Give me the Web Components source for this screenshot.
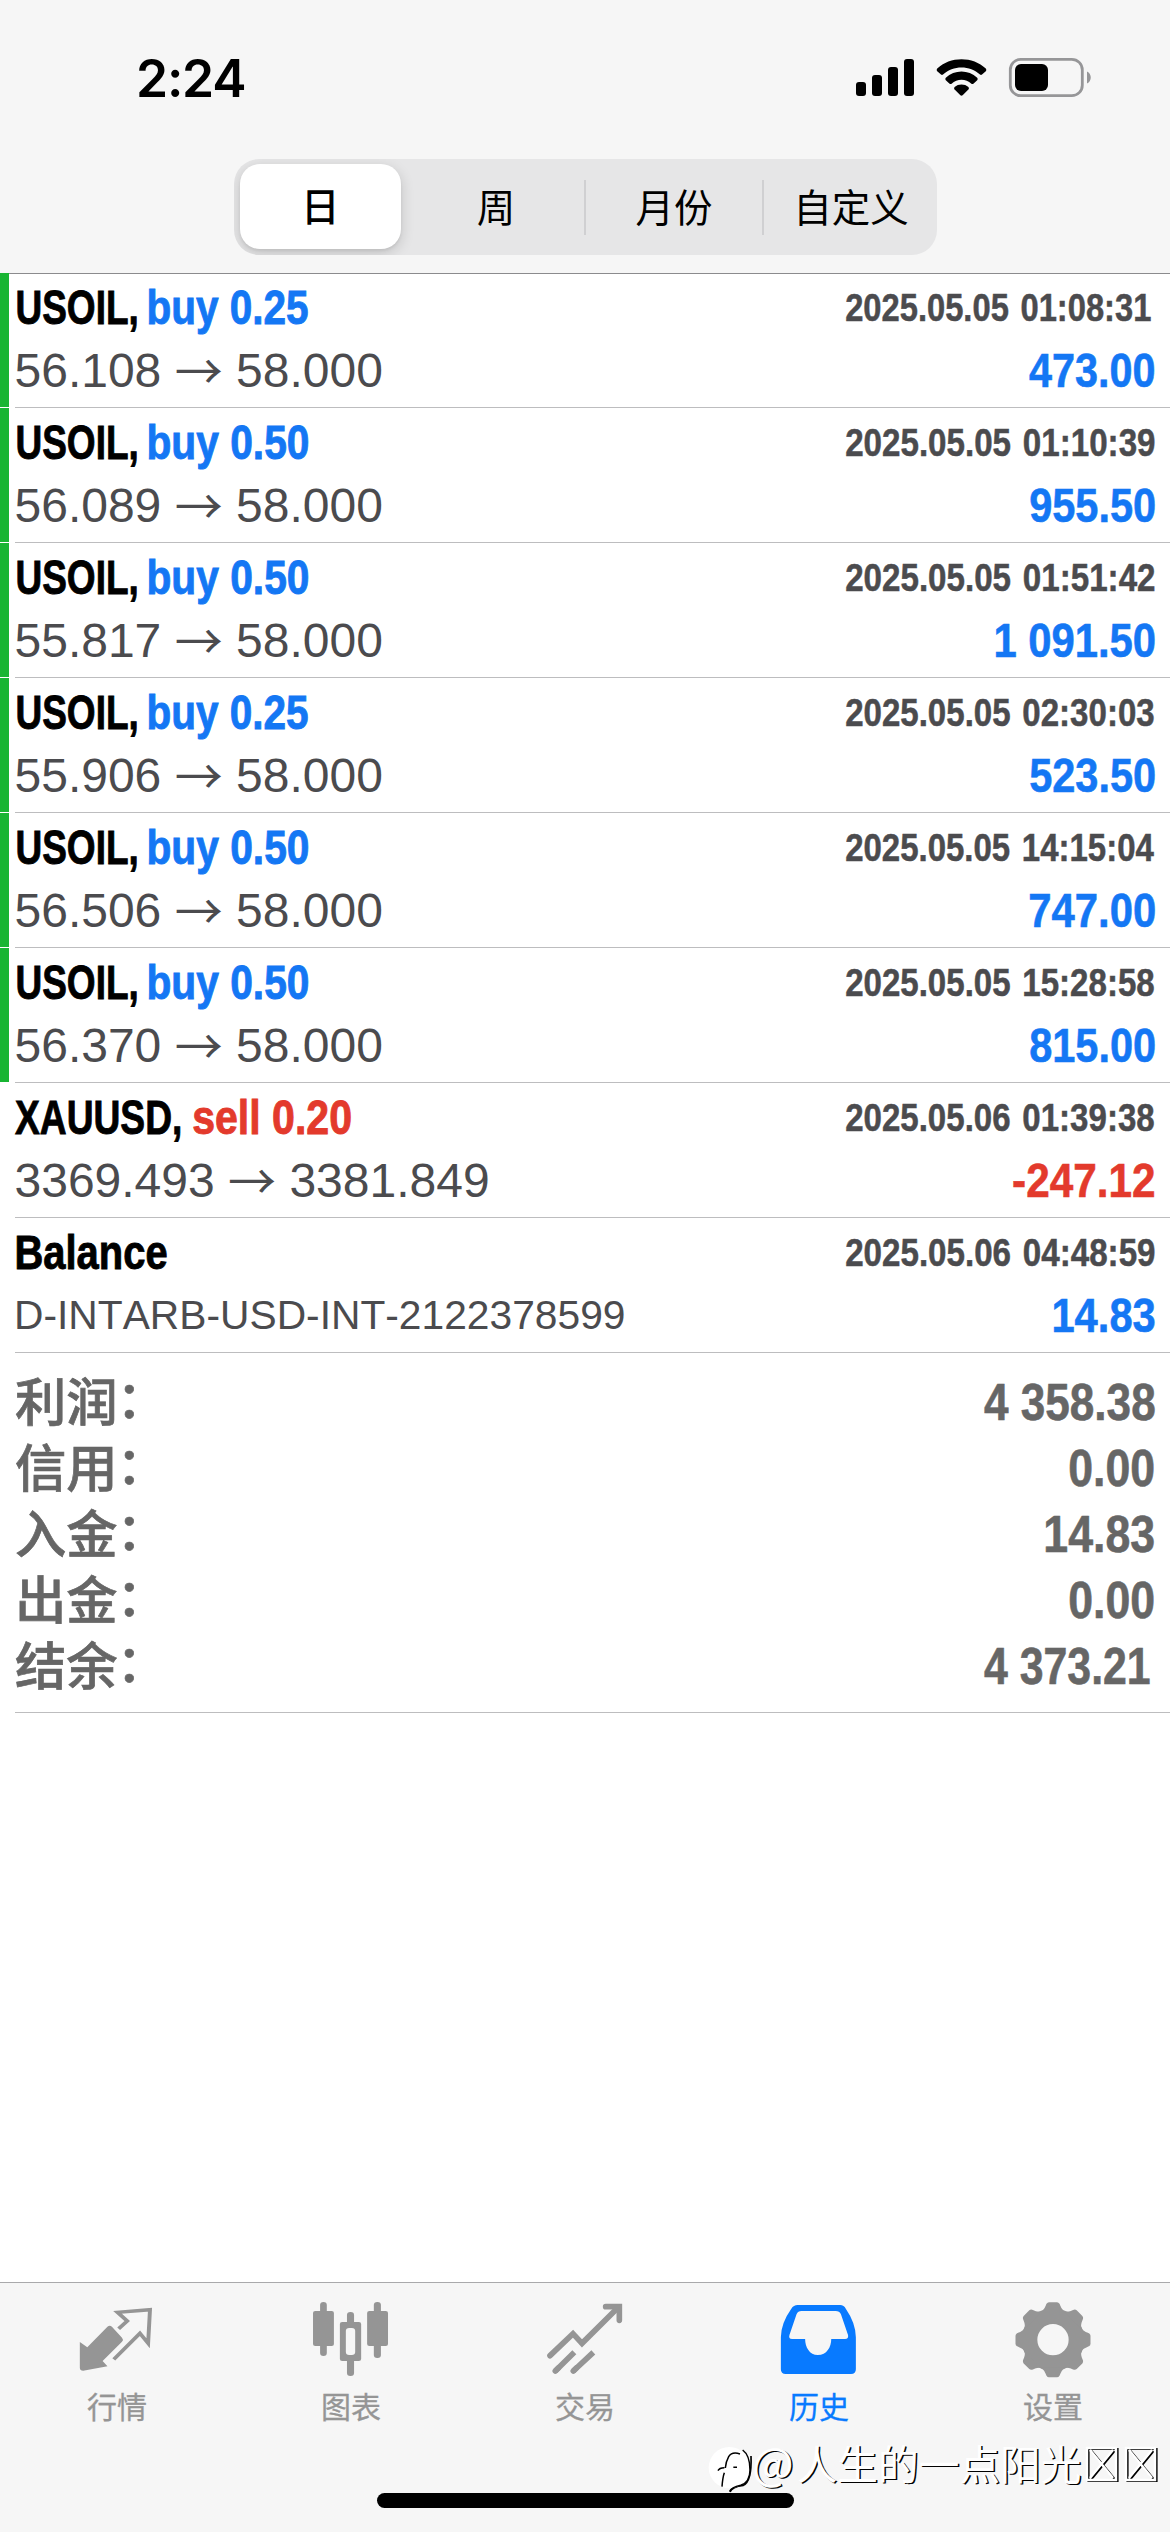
<!DOCTYPE html>
<html lang="zh-CN">
<head>
<meta charset="utf-8">
<meta name="viewport" content="width=device-width">
<title>历史</title>
<style>
html,body{margin:0;padding:0;background:#fff}
body{font-family:"Liberation Sans","Noto Sans CJK SC",sans-serif}
</style>
</head>
<body>
<history-screen></history-screen>
<script>
const CJK = '"Noto Sans CJK SC",sans-serif';

/* Text condensed horizontally so that its ink is exactly `ink` px wide. */
class FitText extends HTMLElement {
  connectedCallback() {
    const root = this.attachShadow({mode: 'open'});
    root.innerHTML = `<style>
      :host{display:block;flex:none;white-space:pre;overflow:visible}
      span{display:inline-block;transform-origin:0 0;font-kerning:none;-webkit-text-stroke:var(--stroke,0) currentColor}
    </style><span></span>`;
    const span = root.querySelector('span');
    span.textContent = this.getAttribute('text');
    const ink = parseFloat(this.getAttribute('ink'));
    const cs = getComputedStyle(this);
    const ctx = document.createElement('canvas').getContext('2d');
    ctx.font = `${cs.fontWeight} ${cs.fontSize} "Liberation Sans"`;
    ctx.fontKerning = 'none';
    const gap = parseFloat(this.getAttribute('gap') || 0);
    span.style.wordSpacing = gap + 'px';
    const m = ctx.measureText(span.textContent);
    const k = ink / (m.actualBoundingBoxRight + m.actualBoundingBoxLeft + gap);
    this.style.width = ink + 'px';
    span.style.transform = `translateX(${m.actualBoundingBoxLeft * k}px) scaleX(${k})`;
  }
}
customElements.define('fit-text', FitText);

class StatusBar extends HTMLElement {
  connectedCallback() {
    this.attachShadow({mode: 'open'}).innerHTML = `<style>
      :host{display:flex;justify-content:space-between;align-items:flex-start;height:159px;padding:48px 78px 0 139px;box-sizing:border-box;color:#000}
      .t{font:600 51.500px/60px Inter,sans-serif;letter-spacing:-1.200px;margin-left:-3px}
      svg{display:block;margin-top:8px}
    </style>
    <div class="t">2:24</div>
    <svg width="238" height="44" viewBox="854 56 238 44">
      <rect x="856" y="82" width="10" height="14" rx="3"/><rect x="872" y="75" width="10" height="21" rx="3"/>
      <rect x="888" y="67" width="10" height="29" rx="3"/><rect x="904" y="59" width="10" height="37" rx="3"/>
      <path d="M937.2 68.5C950 56 973 56 985.8 68.5Q987 70 985.8 71.2L982 74.6Q981 75.3 980 74.6C970 65.2 953 65.2 943 74.6Q942 75.3 941 74.6L937.2 71.2Q936 70 937.2 68.5Z"/>
      <path d="M945.8 77.7C954.5 69.4 968.5 69.4 977.2 77.7Q978.3 79 977.2 80.2L973.4 83.7Q972.4 84.4 971.4 83.7C966 78.5 957 78.5 951.6 83.7Q950.6 84.4 949.6 83.7L945.8 80.2Q944.7 79 945.8 77.7Z"/>
      <path d="M954.6 87C958.4 83.7 964.6 83.7 968.4 87Q969.6 88.3 968.4 89.5L962.6 95.3Q961.5 96.2 960.4 95.3L954.6 89.5Q953.4 88.3 954.6 87Z"/>
      <rect x="1010.3" y="59.3" width="72" height="36.4" rx="10.5" fill="none" stroke="#969698" stroke-width="2.8"/>
      <rect x="1015" y="64" width="33" height="27" rx="6"/>
      <path d="M1087 71.5C1092 73.5 1092 81.500 1087 83.500Z" fill="#969698"/>
    </svg>`;
  }
}
customElements.define('status-bar', StatusBar);

class SegmentedControl extends HTMLElement {
  connectedCallback() {
    this.attachShadow({mode: 'open'}).innerHTML = `<style>
      :host{display:flex;align-items:center;box-sizing:border-box;width:703px;height:96px;margin:0 0 18px 234px;padding-left:5.500px;
        border-radius:25px;background:#e6e6e7;font:400 38.500px/84px ${CJK};color:#000;text-align:center;overflow:hidden}
      div{flex:none}
      .on{width:161.500px;height:84.500px;margin-top:-1px;border-radius:20px;background:#fff;line-height:80px;font-weight:500;box-shadow:0 4px 14px rgba(0,0,0,.16),0 2px 3px rgba(0,0,0,.06)}
      .b,.c,.d{margin-top:-5px}
      .b{width:190px}
      .c{width:176px}
      .d{width:174px}
      i{width:2px;height:55px;background:#d0d0d2;flex:none}
      i.first{margin-left:-7px}
    </style><div class="on">日</div><div class="b">周</div><i class="first"></i><div class="c">月份</div><i></i><div class="d">自定义</div>`;
  }
}
customElements.define('segmented-control', SegmentedControl);

class DealRow extends HTMLElement {
  connectedCallback() {
    const a = n => this.getAttribute(n);
    const act = a('action') ? `<fit-text class="${a('tone')}" text="${a('action')}" ink="${a('action-ink')}"></fit-text>` : '';
    const detail = a('to')
      ? `<div class="price">${a('from')} <b>→</b> ${a('to')}</div>`
      : `<fit-text class="note" text="${a('note')}" ink="607"></fit-text>`;
    this.attachShadow({mode: 'open'}).innerHTML = `<style>
      :host{display:flex;height:135px;background:#fff}
      .mark{width:9px;height:134px;flex:none}
      :host([closed]) .mark{background:#18b532}
      .body{flex:1;margin-left:6px;box-sizing:border-box;border-bottom:1px solid #bdbdbf;padding:7px 15.700px 0 1.500px}
      .line{display:flex;align-items:flex-start;justify-content:space-between;height:63px}
      .name{display:flex;gap:12.500px;margin-left:var(--shift,0)}
      .name,.sum{font:700 48px/56px "Liberation Sans",sans-serif;--stroke:.9px;color:#000}
      .sum{--stroke:.6px}
      .date{font:700 38.500px/44px "Liberation Sans",sans-serif;--stroke:.5px;color:#4b4b4e;margin-top:6px;width:308.300px}
      .price{font:400 48px/56px "Liberation Sans",sans-serif;color:#4b4b4e;margin-left:-2px;white-space:pre;font-kerning:none}
      .price b{font:400 48px/40px ${CJK};vertical-align:-2px}
      .note{font:400 40.500px/56px "Liberation Sans",sans-serif;color:#4b4b4e;margin-top:-1px}
      .blue{color:#1477f4}.red{color:#e33a2c}
    </style>
    <div class="mark"></div>
    <div class="body">
      <div class="line"><div class="name"><fit-text text="${a('symbol')}" ink="${a('symbol-ink')}"></fit-text>${act}</div>
        <div class="date"><fit-text text="${a('date')}" gap="3" ink="${/1$/.test(a('date')) ? 305 : 308.3}"></fit-text></div></div>
      <div class="line">${detail}<fit-text class="sum ${a('sum')[0] === '-' ? 'red' : 'blue'}" text="${a('sum')}" ink="${a('sum-ink')}"></fit-text></div>
    </div>`;
  }
}
customElements.define('deal-row', DealRow);

class SummaryLine extends HTMLElement {
  connectedCallback() {
    this.attachShadow({mode: 'open'}).innerHTML = `<style>
      :host{display:flex;justify-content:space-between;height:66px;color:#666}
      .k{display:flex;font:500 51.300px/66px ${CJK};margin:-2px 0 0 -1px;-webkit-text-stroke:.7px currentColor}
      .k span{margin:-3.500px 0 0 -1px}
      fit-text{font:700 51px/58px "Liberation Sans",sans-serif;--stroke:.6px;margin-top:6px;margin-right:var(--trail,0)}
    </style><div class="k"><slot></slot><span>：</span></div>
    <fit-text text="${this.getAttribute('value')}" ink="${this.getAttribute('ink')}"></fit-text>`;
  }
}
customElements.define('summary-line', SummaryLine);

const gearTeeth = Array.from({length: 8}, (_, i) =>
  `<path transform="rotate(${i * 45})" d="M-12 -28C-8 -31 -7.500 -34 -6.500 -36Q-5.500 -37.500 -4 -37.500H4Q5.500 -37.500 6.500 -36C7.500 -34 8 -31 12 -28Z"/>`).join('');
const ICONS = {
  quotes: ['206.4 105 214.4 270', `<path fill="currentColor" d="M214 246L234 262L288 200Q294 195 300 200L327 233Q332 239 327 245L275 303L288 319L223 332Q214 332 214 323Z"/><path fill="none" stroke="currentColor" stroke-width="10.500" d="M318 206L341 183L315 157L402 149L397 250L375 220L305 298"/>`],
  charts: ['833.6 105 214.4 270', `<g fill="currentColor"><rect x="858" y="126" width="18" height="162" rx="9"/><rect x="839" y="153" width="56" height="105" rx="6"/><rect x="930" y="156" width="19" height="192" rx="9"/><rect x="911" y="186" width="57" height="117" rx="6"/><rect x="1002" y="126" width="19" height="168" rx="9"/><rect x="984" y="153" width="56" height="105" rx="6"/></g><rect x="927" y="204" width="25" height="81" rx="9" fill="#f6f6f6"/>`],
  trade: ['30 15 240 270', `<g fill="none" stroke="currentColor" stroke-width="17"><g stroke-linecap="round"><path d="M45 197L114 131L141 160L250 52"/><path d="M212 50H253V91"/></g><path d="M61 243L118 187M115 243L175 187"/><path stroke-linecap="round" d="M61 243L70 234M115 243L124 234"/></g>`],
  history: ['520 105 214.4 270', `<path fill="currentColor" fill-rule="evenodd" d="M570 135H684Q694 135 699 146Q726 190 726 232V328Q726 342 713 342H538Q525 342 525 328V232Q525 190 553 146Q559 135 570 135ZM580 153Q571 153 567 163L548 225Q545 237 555 237H590C590 262 602 285 624 285C648 285 660 262 660 237H697Q707 237 705 225L686 163Q682 153 672 153Z"/>`],
  settings: ['-40 -44.700 80 90', `<g fill="currentColor"><circle r="23.400" fill="none" stroke="currentColor" stroke-width="15.500"/>${gearTeeth}</g>`]
};

class TabItem extends HTMLElement {
  connectedCallback() {
    const [box, art] = ICONS[this.getAttribute('icon')];
    this.attachShadow({mode: 'open'}).innerHTML = `<style>
      :host{display:flex;flex-direction:column;align-items:center;flex:1;color:#959595;padding-top:12px;font:400 30px/40px ${CJK}}
      :host([active]){color:#087aff}
      svg{display:block}
      div{-webkit-text-stroke:.3px currentColor}
    </style><svg width="80" height="90" viewBox="${box}" preserveAspectRatio="none">${art}</svg><div><slot></slot></div>`;
  }
}
customElements.define('tab-item', TabItem);

class UserMark extends HTMLElement {
  connectedCallback() {
    this.attachShadow({mode: 'open'}).innerHTML = `<style>
      :host{position:absolute;left:705px;top:2439px;display:flex;align-items:flex-start;height:56px;white-space:nowrap}
      .txt{font:400 40.700px/56px ${CJK};color:#fff;text-shadow:1.500px 1px 0 #000;margin:-4px 0 0 -1px}
      .txt span{font-size:44px;line-height:40px;letter-spacing:3px}
      svg{flex:none}
      .tofu{margin-left:3px}
    </style>
    <svg width="48" height="56" viewBox="45 57 144 168"><path d="M183 108Q186 184 160 196Q125 200 120 216" fill="none" stroke="#000" stroke-width="5"/><circle cx="118" cy="143" r="62" fill="#fff"/>
      <path d="M158 90Q180 106 180 150Q180 187 152 196Q124 202 119 214M150 102Q126 94 116 110Q108 124 106 144M84 152Q88 143 103 143M103 158Q98 172 96 200M130 142H141" fill="none" stroke="#000" stroke-width="4.500"/></svg>
    <div class="txt"><span>@</span>人生的一点阳光</div>
    <svg class="tofu" width="76" height="56" viewBox="0 0 76 56" fill="none"><g id="a"><path d="M3 9H32V41H3ZM6 11L29 39M29 11L6 39" stroke="#000" transform="translate(1.500 1)" stroke-width="2.200"/><path d="M3 9H32V41H3ZM6 11L29 39M29 11L6 39" stroke="#fff" stroke-width="2.400"/></g><use href="#a" x="39"/></svg>`;
  }
}
customElements.define('user-mark', UserMark);

class HistoryScreen extends HTMLElement {
  connectedCallback() {
    const deals = [
      ['56.108', '0.25', '2025.05.05 01:08:31', '473.00', 125],
      ['56.089', '0.50', '2025.05.05 01:10:39', '955.50', 124.7],
      ['55.817', '0.50', '2025.05.05 01:51:42', '1 091.50', 158.6],
      ['55.906', '0.25', '2025.05.05 02:30:03', '523.50', 124.7],
      ['56.506', '0.50', '2025.05.05 14:15:04', '747.00', 124.7],
      ['56.370', '0.50', '2025.05.05 15:28:58', '815.00', 124.7]
    ].map(d => `<deal-row closed symbol="USOIL," symbol-ink="120" action="buy ${d[1]}" action-ink="159" tone="blue" from="${d[0]}" to="58.000" date="${d[2]}" sum="${d[3]}" sum-ink="${d[4]}"></deal-row>`).join('');
    this.attachShadow({mode: 'open'}).innerHTML = `<style>
      :host{display:flex;flex-direction:column;position:relative;width:1170px;height:2532px;background:#fff;overflow:hidden}
      header{background:#f6f6f6;height:273px;flex:none}
      .list{flex:1}
      .list deal-row:first-child{background:linear-gradient(#8b8b8d,#8b8b8d) 0 0/100% 1px no-repeat}
      .summary{margin-left:15px;height:360px;box-sizing:border-box;border-bottom:1px solid #bdbdbf;padding:15px 16px 0 1px}
      nav{flex:none;height:250px;box-sizing:border-box;background:#f6f6f6;border-top:1px solid #a9a9ab;display:flex;flex-direction:column;justify-content:space-between}
      .tabs{display:flex}
      .home{width:417px;height:15px;border-radius:8px;background:#000;margin:0 0 24px 377px}
    </style>
    <header><status-bar></status-bar><segmented-control></segmented-control></header>
    <div class="list">${deals}
      <deal-row style="--shift:-1.500px" symbol="XAUUSD," symbol-ink="165.500" action="sell 0.20" action-ink="157.600" tone="red" from="3369.493" to="3381.849" date="2025.05.06 01:39:38" sum="-247.12" sum-ink="141"></deal-row>
      <deal-row symbol="Balance" symbol-ink="150" note="D-INTARB-USD-INT-2122378599" date="2025.05.06 04:48:59" sum="14.83" sum-ink="100.300"></deal-row>
      <div class="summary">
        <summary-line value="4 358.38" ink="170.500">利润</summary-line>
        <summary-line value="0.00" ink="84">信用</summary-line>
        <summary-line value="14.83" ink="108">入金</summary-line>
        <summary-line value="0.00" ink="84">出金</summary-line>
        <summary-line value="4 373.21" ink="165.500" style="--trail:5px">结余</summary-line>
      </div>
    </div>
    <nav><div class="tabs">
      <tab-item icon="quotes">行情</tab-item><tab-item icon="charts">图表</tab-item><tab-item icon="trade">交易</tab-item><tab-item icon="history" active>历史</tab-item><tab-item icon="settings">设置</tab-item>
    </div><div class="home"></div></nav>
    <user-mark></user-mark>`;
  }
}
customElements.define('history-screen', HistoryScreen);
</script>
</body>
</html>
